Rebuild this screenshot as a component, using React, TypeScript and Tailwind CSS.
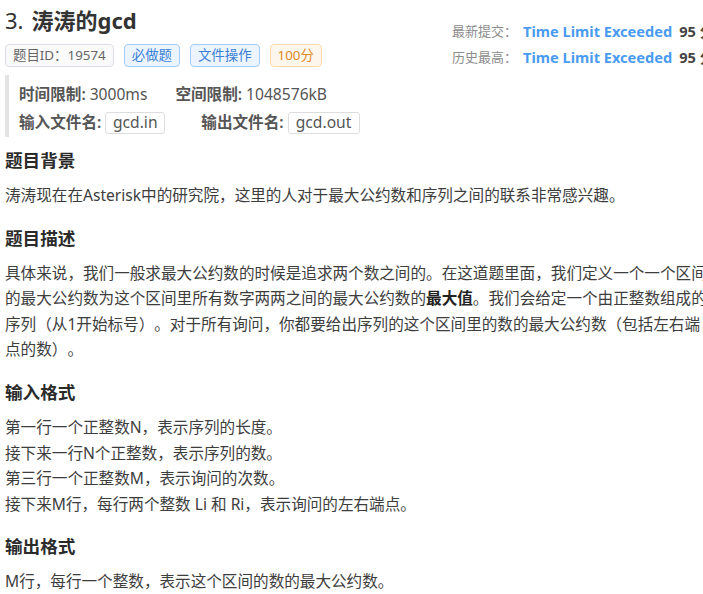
import React from "react";

const font = "font-['Noto_Sans','Noto_Sans_CJK_SC',sans-serif]";

function Tag({ children, className }: { children: React.ReactNode; className: string }) {
  return (
    <span className={`inline-flex h-[23px] items-center rounded-[4px] border px-[7px] text-[13.4px] leading-none ${className}`}>
      {children}
    </span>
  );
}

function Section({ title, children }: { title: string; children: React.ReactNode }) {
  return (
    <section className="mt-[16px]">
      <h3 className="mb-[10px] text-[17.6px] font-bold leading-[26px] text-[#2b2b2b]">{title}</h3>
      <div className="text-[15.6px] leading-[25.6px] text-[#3d3d3d]">{children}</div>
    </section>
  );
}

export default function App() {
  return (
    <div className={`h-[594px] w-[703px] overflow-hidden bg-white ${font} [text-spacing-trim:space-all]`}>
      <div className="w-[708px] pl-[5px]">
        {/* header */}
        <div className="flex items-start">
          <div className="w-[447px] shrink-0 pt-[5px]">
            <h1 className="text-[22px] leading-[30px] text-[#333]">
              3.<span className="ml-[8px] font-bold">涛涛的gcd</span>
            </h1>
            <div className="mt-[9px] flex gap-[10px]">
              <Tag className="border-[#dcdfe6] bg-[#fafafa] text-[#666]">题目ID：19574</Tag>
              <Tag className="border-[#a3cdf7] bg-[#ecf5ff] text-[#3a7fd6]">必做题</Tag>
              <Tag className="border-[#a3cdf7] bg-[#ecf5ff] text-[#3a7fd6]">文件操作</Tag>
              <Tag className="border-[#f7d9ab] bg-[#fdf6ec] text-[#e08a2a]">100分</Tag>
            </div>
          </div>
          <div className="shrink-0 whitespace-nowrap pt-[18px] leading-[26px]">
            <div className="flex items-center">
              <span className="w-[71px] text-[13px] text-[#8c8c8c]">最新提交：</span>
              <span className="text-[14.6px] font-bold text-[#4a9bf0]">Time Limit Exceeded</span>
              <span className="ml-[7px] text-[14.6px] font-bold text-[#444]">95 分</span>
            </div>
            <div className="flex items-center">
              <span className="w-[71px] text-[13px] text-[#8c8c8c]">历史最高：</span>
              <span className="text-[14.6px] font-bold text-[#4a9bf0]">Time Limit Exceeded</span>
              <span className="ml-[7px] text-[14.6px] font-bold text-[#444]">95 分</span>
            </div>
          </div>
        </div>

        {/* limits */}
        <div className="mt-[5px] border-l-[4px] border-[#e3e3e3] pl-[10px] pt-[6px] text-[15.6px] text-[#555]">
          <div className="flex h-[28px] items-center">
            <span className="font-semibold">时间限制:</span>
            <span className="ml-[4px]">3000ms</span>
            <span className="ml-[28px] font-semibold">空间限制:</span>
            <span className="ml-[4px]">1048576kB</span>
          </div>
          <div className="flex h-[28px] items-center">
            <span className="font-semibold">输入文件名:</span>
            <span className="ml-[4px] flex h-[22px] w-[60px] items-center justify-center rounded-[3px] border border-[#ddd]">gcd.in</span>
            <span className="ml-[36px] font-semibold">输出文件名:</span>
            <span className="ml-[4px] flex h-[22px] w-[72px] items-center justify-center rounded-[3px] border border-[#ddd]">gcd.out</span>
          </div>
        </div>

        <div className="-mt-[6px]">
          <Section title="题目背景">
            <p>涛涛现在在Asterisk中的研究院，这里的人对于最大公约数和序列之间的联系非常感兴趣。</p>
          </Section>

          <Section title="题目描述">
            <p>
              具体来说，我们一般求最大公约数的时候是追求两个数之间的。在这道题里面，我们定义一个一个区间的最大公约数为这个区间里所有数字两两之间的最大公约数的<strong className="font-bold text-[#222]">最大值</strong>。我们会给定一个由正整数组成的序列（从1开始标号）。对于所有询问，你都要给出序列的这个区间里的数的最大公约数（包括左右端点的数）。
            </p>
          </Section>

          <Section title="输入格式">
            <p>第一行一个正整数N，表示序列的长度。</p>
            <p>接下来一行N个正整数，表示序列的数。</p>
            <p>第三行一个正整数M，表示询问的次数。</p>
            <p>接下来M行，每行两个整数 Li 和 Ri，表示询问的左右端点。</p>
          </Section>

          <Section title="输出格式">
            <p>M行，每行一个整数，表示这个区间的数的最大公约数。</p>
          </Section>
        </div>
      </div>
    </div>
  );
}
